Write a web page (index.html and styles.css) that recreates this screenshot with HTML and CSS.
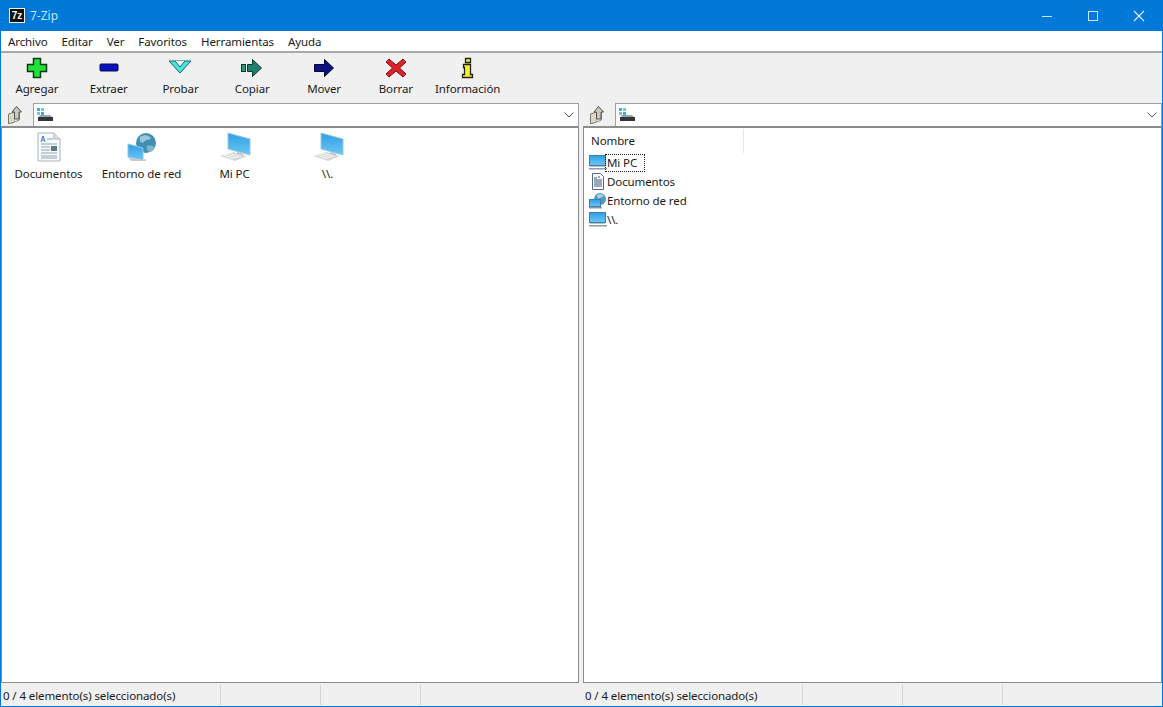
FILE: index.html
```html
<!DOCTYPE html>
<html lang="es">
<head>
  <meta charset="UTF-8">
  <title>7-Zip</title>
  <link rel="stylesheet" href="styles.css">
</head>
<body>

  <svg class="defs" width="0" height="0">
    <defs>
      <linearGradient id="screen" x1="0" y1="0" x2="0" y2="1">
        <stop offset="0" stop-color="#2f9fe6"/>
        <stop offset="1" stop-color="#6cc6f2"/>
      </linearGradient>
    </defs>
    <symbol id="up" viewBox="0 0 16 18">
      <path d="M1.500 8l6-2v10l-6 2z" fill="#dcd8c8" stroke="#77776c"/>
      <path d="M7.500 6h5v8l-5 2" fill="#f2f0e6" stroke="#8a8a80"/>
      <path d="M9.500 0.500l5 5.500h-2.500v7h-4.500v-7h-2.500z" fill="#c8c8c0" stroke="#55554f"/>
    </symbol>
    <symbol id="drive" viewBox="0 0 16 14">
      <rect x="0" y="0" width="3" height="3" fill="#35b5d5"/>
      <rect x="4" y="0" width="3" height="3" fill="#70c8e0"/>
      <rect x="0" y="4" width="3" height="3" fill="#70c8e0"/>
      <rect x="4" y="4" width="3" height="3" fill="#35b5d5"/>
      <path d="M2 9l1-2h10l2 2z" fill="#9aa4a8"/>
      <rect x="1" y="9" width="15" height="4" fill="#30363a"/>
    </symbol>
    <symbol id="pc-big" viewBox="0 0 34 30">
      <path d="M10 1l22 6v16l-22-6z" fill="url(#screen)" stroke="#9cc8de"/>
      <path d="M19 20l6 2v3l-6-1z" fill="#b4bcc2"/>
      <path d="M2 24l13-4 14 4-12 5z" fill="#d2d5d8"/>
      <path d="M5 24l10-3M8 25l10-3M11 26l10-3M13 27l10-3" stroke="#f4f5f6" fill="none"/>
    </symbol>
    <symbol id="doc-big" viewBox="0 0 24 30">
      <path d="M1 1h16l6 6v22h-22z" fill="#f8fafb" stroke="#a9b3ba"/>
      <path d="M17 1v6h6" fill="#dfe6ea" stroke="#a9b3ba"/>
      <path d="M4 10l2-6 2 6M5 8h2" fill="none" stroke="#3c78c8"/>
      <path d="M10 7h6M4 12h16M4 15h9M4 18h9M4 21h16M4 24h16M4 26h16" stroke="#8fa4b4"/>
      <rect x="14" y="14" width="6" height="5" fill="#5b7a85"/>
    </symbol>
    <symbol id="net-big" viewBox="0 0 30 30">
      <circle cx="19" cy="11" r="10" fill="#3f8fb5"/>
      <path d="M13 5c4-3 9-2 11 1-2 3-5 1-7 4-2 2-5 0-4-5z" fill="#9cc6d8"/>
      <path d="M20 14c3-1 6 0 8 1-1 3-3 5-6 5-2-2-3-4-2-6z" fill="#7fb4cc"/>
      <path d="M1 12l15 4v12l-15-3z" fill="url(#screen)" stroke="#8cc8e8"/>
      <path d="M1 25l15 3 3-1v2h-15z" fill="#c4cace"/>
    </symbol>
    <symbol id="pc-small" viewBox="0 0 18 15">
      <rect x="0.500" y="0.500" width="16" height="10" fill="url(#screen)" stroke="#3d7fa8"/>
      <rect x="1" y="11" width="15" height="1" fill="#b7c3ca"/>
      <rect x="0" y="13" width="18" height="1.500" fill="#8f9ba3"/>
    </symbol>
    <symbol id="doc-small" viewBox="0 0 12 17">
      <path d="M0.500 0.500h8l3 3v13h-11z" fill="#f8fafc" stroke="#55688a"/>
      <path d="M2 5h3M2 7h8M2 9h8M2 11h8M2 13h8M6 4h2" stroke="#3f5478"/>
    </symbol>
    <symbol id="net-small" viewBox="0 0 18 16">
      <circle cx="11" cy="6" r="6" fill="#4a9cc4"/>
      <path d="M8 2c3-2 6-1 7 1-2 2-3 1-4 2-2 1-3 0-3-3z" fill="#a7d0e0"/>
      <rect x="0.500" y="6.500" width="11" height="7" fill="url(#screen)" stroke="#3d7fa8"/>
      <rect x="0" y="14" width="13" height="1.500" fill="#8f9ba3"/>
    </symbol>
  </svg>

  <div class="window">
    <header class="titlebar">
      <span class="app-icon">7z</span>
      <span class="title">7-Zip</span>
      <div class="win-buttons">
        <svg class="win-btn" width="46" height="30" viewBox="0 0 46 30"><path d="M18 15.500h10" stroke="#cfe6f7"/></svg>
        <svg class="win-btn" width="46" height="30" viewBox="0 0 46 30"><rect x="18.500" y="10.500" width="9" height="9" fill="none" stroke="#cfe6f7"/></svg>
        <svg class="win-btn" width="46" height="30" viewBox="0 0 46 30"><path d="M18 10l10 10M28 10l-10 10" stroke="#e3f1fb" stroke-width="1.100"/></svg>
      </div>
    </header>

    <nav class="menubar">
      <span>Archivo</span>
      <span>Editar</span>
      <span>Ver</span>
      <span>Favoritos</span>
      <span>Herramientas</span>
      <span>Ayuda</span>
    </nav>

    <div class="toolbar">
      <div class="tool">
        <svg width="24" height="24" viewBox="0 0 24 24"><path d="M8.500 2.500h7v6h6v7h-6v6h-7v-6h-6v-7h6z" fill="#22e03a" stroke="#063a10" stroke-width="1.500"/></svg>
        <span>Agregar</span>
      </div>
      <div class="tool">
        <svg width="24" height="24" viewBox="0 0 24 24"><rect x="3" y="8" width="18" height="7" rx="1" fill="#0a12c0" stroke="#050a50"/></svg>
        <span>Extraer</span>
      </div>
      <div class="tool">
        <svg width="24" height="24" viewBox="0 0 24 24"><path d="M1 5h22l-11 12z" fill="#4fe0e0" stroke="#0f6a6a"/><path d="M7 5l5 6 5-6" fill="#f0f0f0" stroke="#0f6a6a"/></svg>
        <span>Probar</span>
      </div>
      <div class="tool">
        <svg width="24" height="24" viewBox="0 0 24 24"><rect x="1.500" y="8.500" width="4" height="7" fill="#2f9a80" stroke="#0c3a30"/><path d="M7.500 8.500h5v-5l9 8.500-9 8.500v-5h-5z" fill="#20806e" stroke="#0c3a30"/></svg>
        <span>Copiar</span>
      </div>
      <div class="tool">
        <svg width="24" height="24" viewBox="0 0 24 24"><path d="M2.500 8.500h10v-5l9 8.500-9 8.500v-5h-10z" fill="#12127e" stroke="#05053a"/></svg>
        <span>Mover</span>
      </div>
      <div class="tool">
        <svg width="24" height="24" viewBox="0 0 24 24"><path d="M5 3l7 6 7-6 3 3-6.500 6 6.500 6-3 3-7-6-7 6-3-3 6.500-6-6.500-6z" fill="#e0202a" stroke="#7a1015"/></svg>
        <span>Borrar</span>
      </div>
      <div class="tool tool-info">
        <svg width="24" height="24" viewBox="0 0 24 24"><path d="M9.500 2.500h5v4h-5zM7.500 8.500h7v10h2v3h-10v-3h2v-7h-1z" fill="#f4f03a" stroke="#222210" stroke-width="1.300"/></svg>
        <span>Información</span>
      </div>
    </div>

    <div class="panes">
      <section class="pane">
        <div class="pathbar">
          <button class="up-btn"><svg width="16" height="18"><use href="#up"/></svg></button>
          <div class="path-input">
            <svg width="16" height="14"><use href="#drive"/></svg>
            <svg class="chevron" width="10" height="6" viewBox="0 0 10 6"><path d="M0.500 0.500l4.500 4.500 4.500-4.500" fill="none" stroke="#555"/></svg>
          </div>
        </div>
        <div class="file-area icons">
          <div class="icon-item"><svg width="24" height="30"><use href="#doc-big"/></svg><span>Documentos</span></div>
          <div class="icon-item"><svg width="30" height="30"><use href="#net-big"/></svg><span>Entorno de red</span></div>
          <div class="icon-item"><svg width="34" height="30"><use href="#pc-big"/></svg><span>Mi PC</span></div>
          <div class="icon-item"><svg width="34" height="30"><use href="#pc-big"/></svg><span>\\.</span></div>
        </div>
        <footer class="statusbar">
          <span class="cell-main">0 / 4 elemento(s) seleccionado(s)</span>
          <span class="cell"></span>
          <span class="cell"></span>
          <span class="cell-end"></span>
        </footer>
      </section>

      <section class="pane">
        <div class="pathbar">
          <button class="up-btn"><svg width="16" height="18"><use href="#up"/></svg></button>
          <div class="path-input">
            <svg width="16" height="14"><use href="#drive"/></svg>
            <svg class="chevron" width="10" height="6" viewBox="0 0 10 6"><path d="M0.500 0.500l4.500 4.500 4.500-4.500" fill="none" stroke="#555"/></svg>
          </div>
        </div>
        <div class="file-area details">
          <div class="list-header"><span>Nombre</span></div>
          <div class="row"><svg width="18" height="15"><use href="#pc-small"/></svg><span class="focused">Mi PC</span></div>
          <div class="row"><svg class="doc" width="12" height="17"><use href="#doc-small"/></svg><span>Documentos</span></div>
          <div class="row"><svg width="18" height="16"><use href="#net-small"/></svg><span>Entorno de red</span></div>
          <div class="row"><svg width="18" height="15"><use href="#pc-small"/></svg><span>\\.</span></div>
        </div>
        <footer class="statusbar">
          <span class="cell-main">0 / 4 elemento(s) seleccionado(s)</span>
          <span class="cell"></span>
          <span class="cell"></span>
          <span class="cell-end"></span>
        </footer>
      </section>
    </div>
  </div>

</body>
</html>
```

FILE: styles.css
```css
html, body {
  margin: 0;
  height: 100%;
  overflow: hidden;
}
body {
  font-family: "Noto Sans", "Open Sans", sans-serif;
  font-size: 11.5px;
  letter-spacing: -0.1px;
  color: #1a1a1a;
}
.defs {
  position: absolute;
}
.window {
  height: 707px;
  box-sizing: border-box;
  border: 1px solid #0078d7;
  border-top: none;
  display: flex;
  flex-direction: column;
  background: #f0f0f0;
}

/* Title bar */
.titlebar {
  height: 31px;
  flex: none;
  background: #0078d7;
  display: flex;
  align-items: center;
  padding-left: 8px;
  color: #bfe6fb;
}
.app-icon {
  width: 14px;
  height: 13px;
  background: #111;
  color: #fff;
  border: 1px solid #eee;
  font: bold 10px/13px "Liberation Sans", sans-serif;
  letter-spacing: 0;
  text-align: center;
  margin-right: 5px;
}
.title {
  font-size: 12px;
  letter-spacing: 0;
}
.win-buttons {
  margin-left: auto;
  display: flex;
}

/* Menu */
.menubar {
  height: 20px;
  flex: none;
  background: #fff;
  border-bottom: 2px solid #a8a8a8;
  display: flex;
  align-items: center;
  gap: 14px;
  padding-left: 7px;
}

/* Toolbar */
.toolbar {
  height: 50px;
  flex: none;
  display: flex;
}
.tool {
  width: 71.800px;
  display: flex;
  flex-direction: column;
  align-items: center;
  padding-top: 3px;
}
.tool span {
  margin-top: 1px;
  white-space: nowrap;
  line-height: 16px;
}

/* Panes */
.panes {
  flex: 1;
  display: flex;
  gap: 4px;
  min-height: 0;
}
.pane {
  flex: 1;
  min-width: 0;
  display: flex;
  flex-direction: column;
}
.pane:first-child {
  flex: none;
  width: 578px;
}
.pathbar {
  height: 23px;
  flex: none;
  display: flex;
}
.up-btn {
  width: 32px;
  padding: 0 5px 0 0;
  border: none;
  background: #f0f0f0;
  display: flex;
  justify-content: center;
  align-items: center;
}
.path-input {
  flex: 1;
  background: #fff;
  border: 1px solid #a0a0a0;
  border-bottom: none;
  display: flex;
  align-items: center;
  padding-left: 3px;
}
.chevron {
  margin-left: auto;
  margin-right: 4px;
}
.file-area {
  flex: 1;
  background: #fff;
  border: 1px solid #8c8c8c;
  border-top: 2px solid #8c8c8c;
  min-height: 0;
}

/* Large icon view */
.icons {
  display: flex;
  align-items: flex-start;
  padding-top: 4px;
}
.icon-item {
  width: 93px;
  flex: none;
  display: flex;
  flex-direction: column;
  align-items: center;
}
.icon-item span {
  margin-top: 3px;
  line-height: 18px;
  white-space: nowrap;
}

/* Details view */
.details {
  padding-top: 1px;
}
.list-header {
  width: 160px;
  height: 24px;
  line-height: 24px;
  padding-left: 7px;
  box-sizing: border-box;
  border-right: 1px solid #e8e8e8;
}
.row {
  height: 19px;
  display: flex;
  align-items: center;
  padding-left: 5px;
}
.row svg {
  flex: none;
  margin-right: -1px;
}
.row .doc {
  margin: 0 2px 0 3px;
}
.row span {
  padding: 0 1px;
  line-height: 17px;
}
.row .focused {
  width: 40px;
  height: 18px;
  line-height: 18px;
  box-sizing: border-box;
  margin-left: -1px;
  padding-left: 2px;
  outline: 1px dotted #222;
  outline-offset: -1px;
}

/* Status bar */
.statusbar {
  height: 22px;
  padding-top: 1px;
  flex: none;
  display: flex;
  align-items: center;
}
.cell-main {
  width: 219px;
  padding-left: 2px;
  box-sizing: border-box;
  white-space: nowrap;
}
.cell {
  width: 100px;
  height: 20px;
  box-sizing: border-box;
  border-left: 1px solid #d4d4d4;
}
.cell-end {
  flex: 1;
  height: 20px;
  border-left: 1px solid #d4d4d4;
}
```
